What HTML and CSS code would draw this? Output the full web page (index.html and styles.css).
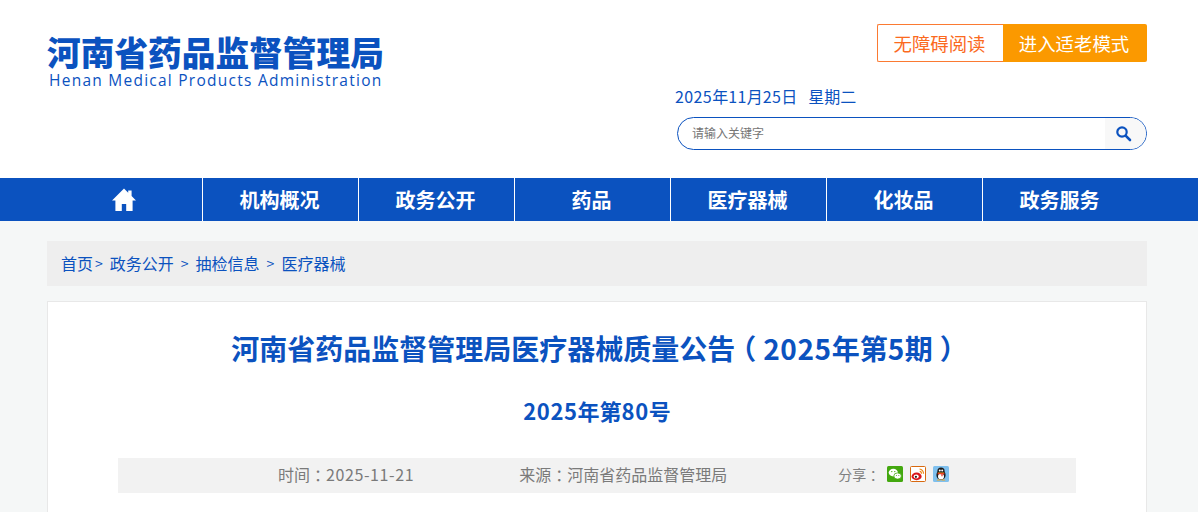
FILE: index.html
```html
<!DOCTYPE html>
<html lang="zh-CN">
<head>
  <meta charset="UTF-8">
  <title>河南省药品监督管理局医疗器械质量公告</title>
  <link rel="stylesheet" href="styles.css">
</head>
<body>
  <header class="header">
    <div class="wrap header-inner">
      <div class="logo">
        <div class="logo-cn">河南省药品监督管理局</div>
        <div class="logo-en">Henan Medical Products Administration</div>
      </div>
      <div class="header-right">
        <div class="mode-btns">
          <a class="btn-access">无障碍阅读</a>
          <a class="btn-elder">进入适老模式</a>
        </div>
        <div class="date"><span class="num">2025</span>年<span class="num">11</span>月<span class="num">25</span>日<span class="weekday">星期二</span></div>
        <div class="search">
          <span class="search-text">请输入关键字</span>
          <span class="search-btn">
            <svg width="17" height="17" viewBox="0 0 17 17"><circle cx="7" cy="7" r="4.7" fill="none" stroke="#0b52bf" stroke-width="2.2"/><path d="M10.6 10.6L15 15" stroke="#0b52bf" stroke-width="2.6" stroke-linecap="round"/></svg>
          </span>
        </div>
      </div>
    </div>
  </header>

  <nav class="nav">
    <div class="nav-inner">
      <a class="nav-item nav-home">
        <svg width="26" height="24" viewBox="0 0 26 24"><path d="M13 .5L1 12.5h3.4V23h6.4v-7h4.4v7h6.4V12.5H25l-4.4-4.4V2.5h-3.4v2.2z" fill="#fff"/></svg>
      </a>
      <a class="nav-item">机构概况</a>
      <a class="nav-item">政务公开</a>
      <a class="nav-item">药品</a>
      <a class="nav-item">医疗器械</a>
      <a class="nav-item">化妆品</a>
      <a class="nav-item">政务服务</a>
    </div>
  </nav>

  <main class="main">
    <div class="wrap">
      <div class="crumbs">
        <a>首页</a><span class="sep sep-first">&gt;</span><a>政务公开</a><span class="sep">&gt;</span><a>抽检信息</a><span class="sep">&gt;</span><a>医疗器械</a>
      </div>
      <article class="article">
        <h1 class="title">河南省药品监督管理局医疗器械质量公告<span class="punc">（</span><span class="num">2025</span>年第<span class="num">5</span>期<span class="punc">）</span></h1>
        <h2 class="subtitle"><span class="num">2025</span>年第<span class="num">80</span>号</h2>
        <div class="meta">
          <span class="meta-time">时间<span class="punc">：</span><span class="num">2025-11-21</span></span>
          <span class="meta-source">来源<span class="punc">：</span>河南省药品监督管理局</span>
          <div class="share">
            <span class="share-label">分享<span class="punc">：</span></span>
            <svg class="share-icon" width="16" height="16" viewBox="0 0 16 16"><rect width="16" height="16" rx="1.5" fill="#43a80f"/><ellipse cx="6.3" cy="6.6" rx="4.6" ry="3.8" fill="#fff"/><ellipse cx="10.6" cy="10" rx="3.8" ry="3.1" fill="#fff" stroke="#43a80f" stroke-width=".8"/><circle cx="4.8" cy="5.6" r=".7" fill="#43a80f"/><circle cx="7.8" cy="5.6" r=".7" fill="#43a80f"/><circle cx="9.4" cy="9.4" r=".5" fill="#43a80f"/><circle cx="11.8" cy="9.4" r=".5" fill="#43a80f"/></svg>
            <svg class="share-icon" width="16" height="16" viewBox="0 0 16 16"><rect x=".5" y=".5" width="15" height="15" rx="1" fill="#fff" stroke="#d8690f"/><ellipse cx="6.6" cy="10.4" rx="5" ry="3.8" fill="#d9161c"/><ellipse cx="6.2" cy="10.6" rx="2.6" ry="2" fill="#fff"/><circle cx="5.9" cy="10.8" r="1.1" fill="#222"/><path d="M9.5 3a4.4 4.4 0 0 1 4 4.8M9.7 5.4a2.2 2.2 0 0 1 1.8 2.4" fill="none" stroke="#ef8a1a" stroke-width="1.2"/></svg>
            <svg class="share-icon" width="16" height="16" viewBox="0 0 16 16"><rect width="16" height="16" rx="1.5" fill="#7fc0ee"/><ellipse cx="8" cy="9" rx="4.6" ry="5" fill="#1b1b1b"/><circle cx="8" cy="5" r="3.6" fill="#1b1b1b"/><ellipse cx="8" cy="10.4" rx="3" ry="3" fill="#fff"/><circle cx="6.8" cy="4.6" r="1" fill="#fff"/><circle cx="9.2" cy="4.6" r="1" fill="#fff"/><path d="M4.6 7h6.8v1.3H9.6v2H8.4V8.3H4.6z" fill="#e8291c"/><path d="M4.5 6.4h7l-1 .9h-5z" fill="#f5a81c"/><path d="M4.5 13.4h3v1.2H3.6zM8.5 13.4h3l.9 1.2H8.5z" fill="#f5a81c"/></svg>
          </div>
        </div>
      </article>
    </div>
  </main>
</body>
</html>
```
FILE: styles.css
```css
* {
  box-sizing: border-box;
}
html, body {
  margin: 0;
  padding: 0;
}
body {
  height: 512px;
  overflow: hidden;
  font-family: "Noto Sans CJK SC", "Liberation Sans", sans-serif;
  background-color: #f5f7f7;
  color: #0b52bf;
}
.num {
  letter-spacing: .6px;
}
/* full-width punctuation sits centred in its cell */
.punc {
  font-feature-settings: "halt";
  margin: 0 .25em;
}
.wrap {
  width: 1100px;
  margin-left: 47px;
}
.header {
  height: 178px;
  background-color: #fff;
}
.header-inner {
  display: flex;
  justify-content: space-between;
}
.logo {
  padding-top: 33px;
}
.logo-cn {
  font-size: 33.7px;
  line-height: 38px;
  font-weight: 900;
  white-space: nowrap;
}
.logo-en {
  font-family: "Open Sans", sans-serif;
  font-size: 15.5px;
  line-height: 18px;
  letter-spacing: 1.25px;
  padding-left: 2px;
  white-space: nowrap;
}
.header-right {
  width: 472px;
  padding-top: 24px;
  display: flex;
  flex-direction: column;
}
.mode-btns {
  display: flex;
  justify-content: flex-end;
  height: 38px;
}
.btn-access,
.btn-elder {
  display: flex;
  align-items: center;
  justify-content: center;
  font-size: 18.4px;
  padding-right: 2px;
}
.btn-access {
  width: 126px;
  color: #fb6a1e;
  border: 1px solid #fb7a32;
  border-right: none;
  border-radius: 2px 0 0 2px;
}
.btn-elder {
  width: 144px;
  color: #fff;
  background-color: #fb9900;
  border-radius: 0 2px 2px 0;
}
.date {
  margin-top: 23px;
  font-size: 16px;
  line-height: 22px;
}
.date .num {
  letter-spacing: .4px;
}
.weekday {
  margin-left: 11px;
}
.search {
  margin-top: 10px;
  margin-left: 2px;
  height: 33px;
  border: 1px solid #0b52bf;
  border-radius: 17px;
  display: flex;
  align-items: center;
  justify-content: space-between;
  overflow: hidden;
}
.search-text {
  padding: 0 0 2px 14px;
  font-size: 12px;
  color: #757575;
}
.search-btn {
  width: 41px;
  height: 31px;
  background-color: #f8f8f8;
  display: flex;
  align-items: center;
  justify-content: center;
  padding-right: 4px;
}
.nav {
  height: 43px;
  background-color: #0b52bf;
}
.nav-inner {
  width: 1100px;
  margin-left: 47px;
  display: flex;
  height: 100%;
}
.nav-item {
  width: 156px;
  height: 100%;
  display: flex;
  align-items: center;
  justify-content: center;
  padding-right: 2px;
  color: #fff;
  font-size: 20px;
  font-weight: 700;
  border-left: 1px solid #fff;
}
.nav-home {
  border-left: none;
  width: 155px;
}
.main {
  padding-top: 20px;
}
.crumbs {
  height: 45px;
  background-color: #eeeeee;
  display: flex;
  align-items: center;
  padding: 0 0 2px 14px;
  font-size: 16px;
}
.sep {
  font-size: 14px;
  margin: 0 7px;
  color: #0b52bf;
}
.sep-first {
  margin-left: 2px;
  margin-right: 7px;
}
.article {
  margin-top: 15px;
  height: 211px;
  background-color: #fff;
  border: 1px solid #e8e8e8;
  border-bottom: none;
  padding: 0 70px;
}
.title {
  margin: 25px 0 0;
  padding-right: 2px;
  font-size: 28px;
  line-height: 42px;
  font-weight: 700;
  text-align: center;
  white-space: nowrap;
}
.subtitle {
  margin: 20px 0 0;
  font-size: 22px;
  line-height: 42px;
  font-weight: 700;
  text-align: center;
}
.meta {
  margin-top: 27px;
  height: 35px;
  padding-bottom: 3px;
  background-color: #f2f2f2;
  display: flex;
  align-items: center;
  color: #7a7a7a;
  font-size: 16px;
}
.meta-time {
  margin-left: 160px;
  white-space: nowrap;
}
.meta-source {
  margin-left: 105px;
  white-space: nowrap;
}
.share {
  display: flex;
  align-items: center;
  margin-left: 111px;
}
.share-label {
  font-size: 14px;
  color: #808080;
  white-space: nowrap;
}
.share-icon {
  margin-left: 7px;
  flex-shrink: 0;
}
```
